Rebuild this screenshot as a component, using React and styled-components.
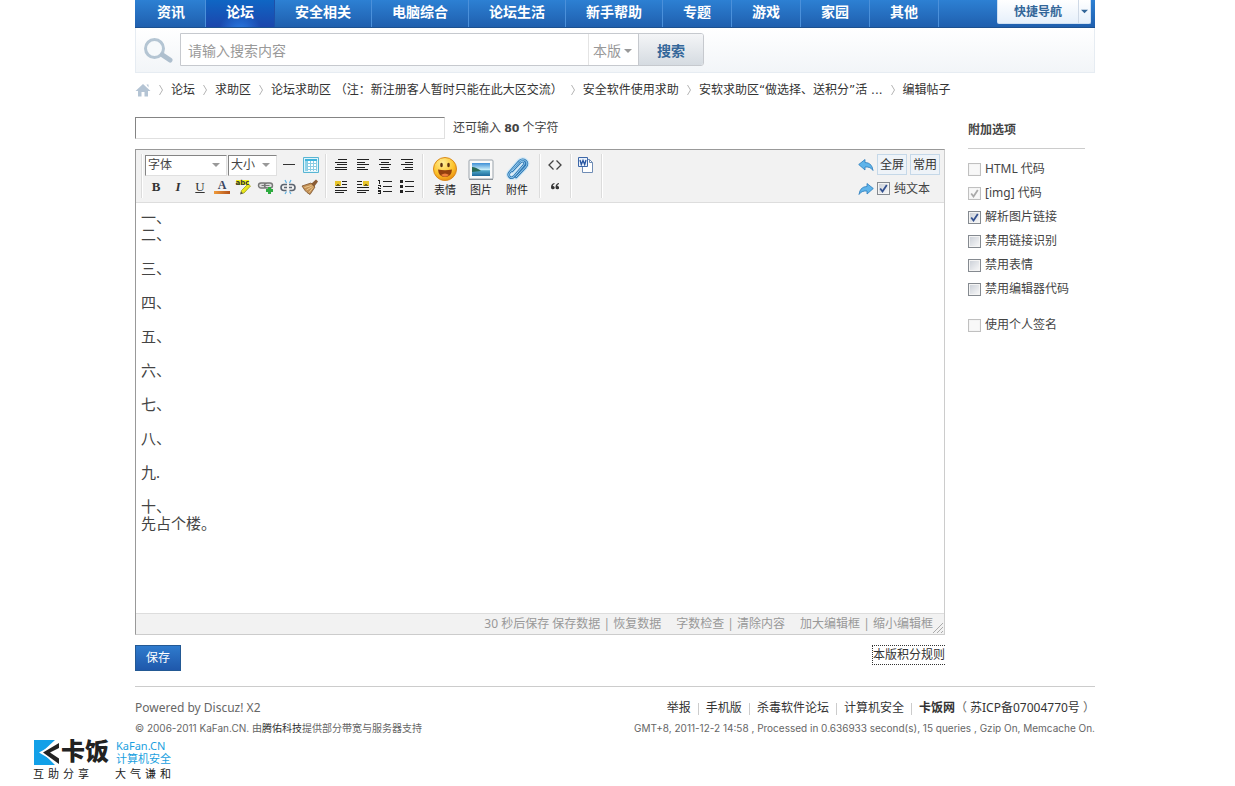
import React from "react";
import styled, { createGlobalStyle } from "styled-components";

const GlobalStyle = createGlobalStyle`
  body {
    margin: 0;
    background: #fff;
    color: #444;
    font: 12px/18px "Noto Sans", "Noto Sans CJK SC", sans-serif;
  }
  * {
    box-sizing: border-box;
  }
  button, input, select, textarea {
    font: inherit;
    color: inherit;
    margin: 0;
    padding: 0;
    border-radius: 0;
  }
  button {
    cursor: pointer;
  }
  a {
    color: #333;
    text-decoration: none;
  }
`;

const Page = styled.div`
  padding: 0 140px 0 135px;
`;

const Nav = styled.nav`
  display: flex;
  height: 28px;
  padding: 0 4px 0 2px;
  background: linear-gradient(#2d80d3, #1f5fae);
  border-bottom: 1px solid #1c5190;
`;

const NavLink = styled.a`
  padding: 0 20px;
  border-right: 1px solid ${(p) => (p.$active ? "#1e50a8" : "#4b90da")};
  background: ${(p) =>
    p.$active
      ? "radial-gradient(ellipse at 50% 120%, #2a80e8 0, transparent 45%), linear-gradient(#0f66c4, #1c46ac)"
      : "none"};
  color: #fff;
  font-size: 14px;
  font-weight: 700;
  line-height: 24px;
  white-space: nowrap;
`;

const QuickNav = styled.button`
  display: flex;
  align-items: center;
  width: 94px;
  height: 24px;
  margin-left: auto;
  border: 1px solid #cfe0f2;
  border-top: 0;
  border-radius: 0 0 2px 2px;
  background: linear-gradient(#fff, #e6f0fb);
  color: #336699;
  font-weight: 600;
  span {
    flex: 1;
  }
  svg {
    width: 12px;
    height: 100%;
    border-left: 1px solid #cfd9e6;
    padding: 0 2px;
  }
`;

const SearchBar = styled.form`
  display: flex;
  align-items: center;
  height: 45px;
  padding: 0 7px;
  border: 1px solid #e6ecf2;
  border-top: 0;
  background: linear-gradient(#fff, #f2f5f8);
`;

const SearchBox = styled.div`
  display: flex;
  width: 524px;
  height: 33px;
  margin: 0 0 1px 6px;
  border: 1px solid #c6c9ce;
  border-radius: 0 3px 3px 0;
  background: #fff;
  font-size: 14px;
`;

const SearchInput = styled.input`
  flex: 1;
  min-width: 0;
  padding: 2px 7px 0;
  border: 0;
  outline: 0;
  background: none;
  &::placeholder {
    color: #999;
    opacity: 1;
  }
`;

const Scope = styled.button`
  display: flex;
  align-items: center;
  gap: 3px;
  width: 50px;
  padding: 2px 4px 0;
  border: 0;
  border-left: 1px solid #e4e4e4;
  background: none;
  color: #999;
`;

const SearchButton = styled.button`
  width: 65px;
  padding-top: 2px;
  border: 0;
  border-left: 1px solid #c6c9ce;
  border-radius: 0 2px 2px 0;
  background: linear-gradient(#f4f5f7, #d5dbe1);
  color: #336699;
  font-weight: 700;
`;

const Crumbs = styled.nav`
  display: flex;
  align-items: center;
  height: 34px;
  font-family: "DejaVu Sans", "Noto Sans CJK SC", sans-serif;
  white-space: nowrap;
  > svg {
    flex: none;
  }
`;

const Columns = styled.div`
  display: grid;
  grid-template-columns: minmax(0, 1fr) 117px;
  gap: 23px;
  padding: 10px 10px 0 0;
`;

const Subject = styled.div`
  display: flex;
  align-items: center;
  gap: 8px;
  height: 22px;
  input {
    width: 310px;
    height: 22px;
    padding: 0 4px;
    border: 1px solid;
    border-color: #848484 #e0e0e0 #e0e0e0 #848484;
    outline: 0;
  }
  strong {
    font-family: "DejaVu Sans", sans-serif;
    font-size: 11px;
  }
`;

const Editor = styled.section`
  margin-top: 10px;
  border: 1px solid;
  border-color: #999 #ccc #ccc #999;
`;

const Toolbar = styled.div`
  display: flex;
  height: 53px;
  padding: 4px 4px 4px 5px;
  border-bottom: 1px solid #ddd;
  background: #f2f2f2;
`;

const Group = styled.div`
  padding: 0 ${(p) => p.$pad || 0}px;
  border-right: 1px solid #dcdcdc;
  box-shadow: 1px 0 #fff;
`;

const ToolRow = styled.div`
  display: flex;
  align-items: center;
  height: 22px;
`;

const Tool = styled.button`
  display: flex;
  align-items: center;
  justify-content: center;
  width: 22px;
  height: 22px;
  border: 0;
  background: none;
`;

const Letter = styled.span`
  font: ${(p) => (p.$underline ? 400 : 700)} 13px/16px "Liberation Serif", serif;
  font-style: ${(p) => (p.$italic ? "italic" : "normal")};
  text-decoration: ${(p) => (p.$underline ? "underline" : "none")};
  color: #333;
`;

const BigTools = styled(Group)`
  display: flex;
`;

const BigTool = styled.button`
  display: flex;
  flex-direction: column;
  align-items: center;
  width: 36px;
  padding-top: 2px;
  border: 0;
  background: none;
  color: #222;
  font-size: 11px;
  line-height: 16px;
`;

const Stack = styled.div`
  display: grid;
  width: ${(p) => p.$w}px;
  height: 21px;
  margin-right: 1px;
  align-items: center;
  > * {
    grid-area: 1 / 1;
  }
  svg {
    justify-self: end;
    margin-right: 7px;
    pointer-events: none;
  }
`;

const Select = styled.select`
  appearance: none;
  width: 100%;
  height: 100%;
  padding-left: 2px;
  border: 1px solid;
  border-color: #848484 #e0e0e0 #e0e0e0 #848484;
  background: #fff;
`;

const ViewTools = styled.div`
  display: grid;
  grid-template-columns: 16px auto;
  grid-template-rows: 21px 27px;
  column-gap: 3px;
  align-items: center;
  height: 48px;
  margin-left: auto;
  > div {
    display: flex;
    gap: 3px;
  }
`;

const ModeButton = styled.button`
  width: 30px;
  height: 21px;
  border: 1px solid #c5d8e8;
  background: #eef3f8;
  color: #333;
  line-height: 18px;
`;

const IconButton = styled.button`
  display: flex;
  border: 0;
  background: none;
`;

const TextArea = styled.textarea`
  display: block;
  width: 100%;
  height: 410px;
  padding: 6px 5px;
  border: 0;
  outline: 0;
  resize: none;
  font-size: 15px;
  line-height: 17px;
`;

const StatusBar = styled.div`
  display: flex;
  justify-content: flex-end;
  align-items: center;
  height: 21px;
  border-top: 1px solid #ddd;
  background: #f2f2f2;
  color: #999;
  a {
    color: #999;
  }
  > span {
    margin-right: 15px;
  }
  > span:last-of-type {
    margin-right: 0;
  }
  svg {
    align-self: flex-end;
  }
`;

const Actions = styled.div`
  display: flex;
  justify-content: space-between;
  align-items: flex-start;
  margin-top: 10px;
`;

const SaveButton = styled.button`
  width: 46px;
  height: 26px;
  border: 1px solid #235994;
  background: linear-gradient(#2f7bcd, #1f58ab);
  color: #fff;
`;

const RuleLink = styled.a`
  border: 1px dotted #333;
  border-right: 0;
`;

const SideTitle = styled.h2`
  margin: 4px 0 8px;
  padding-bottom: 9px;
  border-bottom: 1px solid #ccc;
  font-size: 12px;
  line-height: 18px;
`;

const Option = styled.label`
  display: flex;
  align-items: center;
  gap: 4px;
  height: 24px;
  margin-top: ${(p) => (p.$spaced ? 12 : 0)}px;
  color: #444;
  white-space: nowrap;
`;

const CheckMark = styled.span`
  display: grid;
  place-items: center;
  > * {
    grid-area: 1 / 1;
  }
  svg {
    pointer-events: none;
  }
`;

const CheckInput = styled.input`
  appearance: none;
  width: 13px;
  height: 13px;
  border: 1px solid ${(p) => (p.disabled ? "#c0c0c0" : "#858a90")};
  background: ${(p) =>
    p.disabled ? "#f8f8f8" : "linear-gradient(135deg, #c9ced6, #fafafa)"};
  box-shadow: inset 0 0 0 1px #f4f4f4;
`;

const Footer = styled.footer`
  display: flex;
  justify-content: space-between;
  margin-top: 15px;
  padding-top: 11px;
  border-top: 1px solid #ccc;
  color: #666;
  p {
    margin: 0;
    line-height: 20px;
  }
`;

const FooterRight = styled.div`
  text-align: right;
  i {
    display: inline-block;
    height: 12px;
    margin: 0 7px;
    border-left: 1px solid #ccc;
    vertical-align: middle;
  }
`;

const Small = styled.p`
  font-family: Inter, "Noto Sans CJK SC", sans-serif;
  font-size: 10px;
`;

const Brand = styled.div`
  display: grid;
  grid-template-columns: 28px 48px auto;
  width: max-content;
  margin-left: 33px;
  color: #222;
`;

const BrandName = styled.strong`
  font-size: 24px;
  font-weight: 900;
  line-height: 26px;
`;

const BrandSite = styled.div`
  padding: 1px 0 0 7px;
  color: #1a9fe0;
  font-size: 11px;
  line-height: 13px;
  div {
    white-space: nowrap;
  }
`;

const Mottos = styled.div`
  display: flex;
  grid-column: 1 / -1;
  justify-content: space-between;
  font-size: 11px;
  line-height: 16px;
`;

const Motto = styled.div`
  display: flex;
  gap: 4px;
`;

const Arrow = ({ size = 8, color = "#999" }) => (
  <svg width={size} height={size / 2} viewBox="0 0 8 4">
    <path d="M0 0h8L4 4z" fill={color} />
  </svg>
);

const CrumbArrow = () => (
  <svg width="20" height="12" viewBox="0 0 20 12">
    <path d="M8.500 1 L11.500 6 L8.500 11" fill="none" stroke="#b5b5b5" />
  </svg>
);

const Lines = ({ rows }) => (
  <svg width="14" height="14" viewBox="0 0 14 14" shapeRendering="crispEdges">
    {rows.map(([x, w], i) => (
      <rect key={i} x={x} y={1 + i * 2.5} width={w} height="1" fill="#222" />
    ))}
  </svg>
);

const alignments = {
  自动排版: [[4, 9], [1, 12], [3, 10], [1, 12], [1, 12]],
  左对齐: [[1, 12], [1, 8], [1, 12], [1, 8], [1, 11]],
  居中: [[1, 12], [3, 8], [1, 12], [3, 8], [2, 10]],
  右对齐: [[1, 12], [5, 8], [1, 12], [5, 8], [3, 10]],
};

const Float = ({ right }) => (
  <svg width="14" height="14" viewBox="0 0 14 14" shapeRendering="crispEdges">
    <path d={right ? "M1 1h5v1H1zM1 4h5v1H1z" : "M8 1h5v1H8zM8 4h5v1H8z"} fill="#222" />
    <path d="M1 7h12v1H1zM1 10h12v1H1zM1 12h9v1H1z" fill="#222" />
    <rect x={right ? 7 : 1} y="1" width="6" height="5" fill="#e8c52b" />
    <path d={right ? "M7 6l3-2 3 2z" : "M1 6l3-2 3 2z"} fill="#70601a" />
  </svg>
);

const List = ({ ordered }) => (
  <svg width="16" height="16" viewBox="0 0 16 16" shapeRendering="crispEdges">
    <path d="M6 2h9v1H6zM6 7h9v1H6zM6 12h9v1H6z" fill="#222" />
    {ordered ? (
      <path d="M1 1h2v4H2V2H1zM1 6h3v2H2v1h2v1H1V8h2V7H1zM1 11h3v4H1v-1h2v-1H1v-1h2H1z" fill="#222" />
    ) : (
      <path d="M1 1h3v3H1zM1 6h3v3H1zM1 11h3v3H1z" fill="#222" />
    )}
  </svg>
);

const TableIcon = () => (
  <svg width="16" height="16" viewBox="0 0 16 16">
    <path d="M.5.500h15v15H.5z" fill="#dff4fb" stroke="#58b5d3" />
    <path d="M2 2h12v2H2z" fill="#3fb4dc" />
    <path d="M2 4h2v10H2z" fill="#8fd4ea" />
    <path d="M4 4h10v10H4z" fill="#fff" />
    <path d="M4.500 4v10M7.500 4v10M10.500 4v10M13.500 4v10M4 6.500h10M4 9.500h10M4 12.500h10" stroke="#8ccce3" />
  </svg>
);

const MarkerIcon = () => (
  <svg width="18" height="18" viewBox="0 0 18 18">
    <path d="M1 2h13v5H1z" fill="#f3f31a" />
    <path d="M13 6l2.500 2-6.500 7-3 .5.500-3z" fill="#e9e71b" stroke="#9a9a20" strokeWidth=".8" />
    <path d="M5 16.500l1-3 2 2z" fill="#555" />
    <text x="7.500" y="7" textAnchor="middle" fontFamily="DejaVu Sans, sans-serif" fontWeight="700" fontSize="7" fill="#333">abc</text>
  </svg>
);

const LinkIcon = () => (
  <svg width="18" height="16" viewBox="0 0 18 16">
    <g fill="#ddd" stroke="#777" strokeWidth="1.400">
      <rect x="1.500" y="4" width="8" height="5" rx="2.500" />
      <rect x="7.500" y="4" width="8" height="5" rx="2.500" />
    </g>
    <path d="M4.500 6.500h8" stroke="#777" />
    <path d="M11 8h3v2h2v3h-2v2h-3v-2H9v-3h2z" fill="#2eab3f" />
  </svg>
);

const UnlinkIcon = () => (
  <svg width="16" height="16" viewBox="0 0 16 16">
    <path d="M7 5.500H4a2.500 2.500 0 000 6h2.500M9 5.500h3a2.500 2.500 0 010 6H9.500M4 8.500h3M9 8.500h3" fill="none" stroke="#5b6470" strokeWidth="1.600" />
    <path d="M6.500 4L5 1M9.500 4L11 1M6.500 12.500L5 15M9.500 12.500L11 15" stroke="#5fb2e2" strokeWidth="1.200" />
  </svg>
);

const BrushIcon = () => (
  <svg width="18" height="16" viewBox="0 0 18 16">
    <path d="M10 5l5-4.500 2 2L13 8z" fill="#8a5c35" />
    <path d="M1 7l9-3 4 4-5 7.500-3-2-2-2z" fill="#c29055" stroke="#7d5530" strokeWidth=".8" />
    <path d="M3.500 8.500l7-2M5.500 11l6-3.500M8 13.500l4-5" stroke="#ecc88e" />
  </svg>
);

const ColorIcon = () => (
  <svg width="16" height="16" viewBox="0 0 16 16">
    <defs>
      <linearGradient id="swatch">
        <stop offset="0" stopColor="#f09b3a" />
        <stop offset="1" stopColor="#b3521b" />
      </linearGradient>
    </defs>
    <text x="8" y="10" textAnchor="middle" fontFamily="Liberation Serif, serif" fontWeight="700" fontSize="12" fill="#3a4560">A</text>
    <path d="M0 12h16v3H0z" fill="url(#swatch)" />
  </svg>
);

const SmileIcon = () => (
  <svg width="26" height="26" viewBox="0 0 26 26">
    <defs>
      <radialGradient id="face" cx=".4" cy=".25" r=".8">
        <stop offset="0" stopColor="#fff09a" />
        <stop offset=".6" stopColor="#fdc42c" />
        <stop offset="1" stopColor="#e8860c" />
      </radialGradient>
    </defs>
    <circle cx="13" cy="13" r="11.500" fill="url(#face)" stroke="#d98a1c" />
    <ellipse cx="9.500" cy="9" rx="1.300" ry="2.300" fill="#5d3210" />
    <ellipse cx="16.500" cy="9" rx="1.300" ry="2.300" fill="#5d3210" />
    <path d="M6 13.500q7 1.500 14 0-.5 7.500-7 7.500t-7-7.500z" fill="#94400e" />
    <path d="M9 19q4-3 8 0-4 3.500-8 0z" fill="#f0803c" />
  </svg>
);

const PictureIcon = () => (
  <svg width="26" height="26" viewBox="0 0 26 26">
    <defs>
      <linearGradient id="sky" x2="0" y2="1">
        <stop offset="0" stopColor="#3d8fd6" />
        <stop offset=".5" stopColor="#c8ecf8" />
        <stop offset=".6" stopColor="#4fa6c8" />
        <stop offset="1" stopColor="#1d6a9c" />
      </linearGradient>
    </defs>
    <rect x="1" y="4" width="24" height="19" rx="1" fill="#fafafa" stroke="#9aa3ab" />
    <path d="M4 7h18v13H4z" fill="url(#sky)" />
    <path d="M4 11q4 0 9 4l-9 1z" fill="#286a56" />
    <path d="M1 23.500h24" stroke="#8a9299" />
  </svg>
);

const clipPath =
  "M8 15l8-8.500c3-3 6 0 3.500 3L10 20.500c-3 3-7-.5-4.500-4L15 5.500c4-4.500 11 .5 6.500 5.500L12 21";

const ClipIcon = () => (
  <svg width="26" height="26" viewBox="0 0 26 26" fill="none" strokeLinecap="round">
    <path d={clipPath} stroke="#cfe8f7" strokeWidth="5" />
    <path d={clipPath} stroke="#2f78b4" strokeWidth="2.600" />
    <path d={clipPath} stroke="#9ed2f2" strokeWidth="1" />
  </svg>
);

const CodeIcon = () => (
  <svg width="14" height="12" viewBox="0 0 14 12" fill="none" stroke="#444" strokeWidth="1.300">
    <path d="M5.500 1.500L1 6l4.500 4.500M8.500 1.500L13 6l-4.500 4.500" />
  </svg>
);

const QuoteIcon = () => (
  <svg width="8" height="8" viewBox="0 0 8 8" fill="#333">
    <path d="M3.500 0C1 .5 0 2 0 4.500a1.800 1.800 0 103.400-.8q-.6-.9-1.700-.7.2-1.400 1.800-2zM8 0C5.500.5 4.500 2 4.500 4.500a1.800 1.800 0 103.400-.8Q7.300 2.800 6.200 3 6.400 1.600 8 1z" />
  </svg>
);

const WordIcon = () => (
  <svg width="16" height="16" viewBox="0 0 16 16">
    <path d="M4.500 2.500h7l3 3v10h-10z" fill="#fff" stroke="#6f8cb5" />
    <path d="M11.500 2.500v3h3" fill="none" stroke="#6f8cb5" />
    <path d="M.5.500h9v9h-9z" fill="#eaf1fb" stroke="#3d67a8" />
    <path d="M2 3l1.300 4.500L5 3.500l1.700 4L8 3" fill="none" stroke="#2554a0" strokeWidth="1.300" />
  </svg>
);

const UndoIcon = ({ flip }) => (
  <svg width="16" height="14" viewBox="0 0 16 14">
    <path
      transform={flip ? "translate(16 0) scale(-1 1)" : undefined}
      d="M.7 6.500L7 1.500v3q7 0 8 8-2.500-4-8-3.500v3z"
      fill="#5fb4ea"
      stroke="#2b7cbc"
      strokeWidth=".8"
    />
  </svg>
);

const Check = ({ id, disabled, defaultChecked }) => {
  const [checked, setChecked] = React.useState(Boolean(defaultChecked));
  return (
    <CheckMark>
      <CheckInput
        id={id}
        type="checkbox"
        disabled={disabled}
        checked={checked}
        onChange={(e) => setChecked(e.target.checked)}
      />
      {checked && (
        <svg width="9" height="9" viewBox="0 0 9 9" fill="none">
          <path d="M1.200 4.500L3.500 7.500L7.800 1" stroke={disabled ? "#aaa" : "#33508f"} strokeWidth="1.800" />
        </svg>
      )}
    </CheckMark>
  );
};

const navItems = [
  "资讯",
  "论坛",
  "安全相关",
  "电脑综合",
  "论坛生活",
  "新手帮助",
  "专题",
  "游戏",
  "家园",
  "其他",
];

const crumbs = [
  "论坛",
  "求助区",
  "论坛求助区 （注：新注册客人暂时只能在此大区交流）",
  "安全软件使用求助",
  "安软求助区“做选择、送积分”活 ...",
  "编辑帖子",
];

const options = [
  { id: "html", label: "HTML 代码", disabled: true },
  { id: "img", label: "[img] 代码", disabled: true, checked: true },
  { id: "parseimg", label: "解析图片链接", checked: true },
  { id: "nolink", label: "禁用链接识别" },
  { id: "nosmile", label: "禁用表情" },
  { id: "nocode", label: "禁用编辑器代码" },
  { id: "sign", label: "使用个人签名", disabled: true, spaced: true },
];

const message =
  "一、\n二、\n\n三、\n\n四、\n\n五、\n\n六、\n\n七、\n\n八、\n\n九.\n\n十、\n先占个楼。";

const mottos = ["互助分享", "大气谦和"];

const EditorToolbar = () => (
  <Toolbar>
    <Group />
    <Group $pad={3}>
      <ToolRow>
        <Stack $w={82}>
          <Select aria-label="字体">
            <option>字体</option>
          </Select>
          <Arrow />
        </Stack>
        <Stack $w={49}>
          <Select aria-label="大小">
            <option>大小</option>
          </Select>
          <Arrow />
        </Stack>
        <Tool aria-label="分隔线">
          <svg width="12" height="2">
            <path d="M0 0h12v1H0z" fill="#333" />
          </svg>
        </Tool>
        <Tool aria-label="表格"><TableIcon /></Tool>
      </ToolRow>
      <ToolRow>
        <Tool><Letter>B</Letter></Tool>
        <Tool><Letter $italic>I</Letter></Tool>
        <Tool><Letter $underline>U</Letter></Tool>
        <Tool aria-label="文字颜色"><ColorIcon /></Tool>
        <Tool aria-label="背景色"><MarkerIcon /></Tool>
        <Tool aria-label="添加链接"><LinkIcon /></Tool>
        <Tool aria-label="移除链接"><UnlinkIcon /></Tool>
        <Tool aria-label="清除格式"><BrushIcon /></Tool>
      </ToolRow>
    </Group>
    <Group $pad={4}>
      <ToolRow>
        {Object.entries(alignments).map(([name, rows]) => (
          <Tool key={name} aria-label={name}><Lines rows={rows} /></Tool>
        ))}
      </ToolRow>
      <ToolRow>
        <Tool aria-label="左浮动"><Float /></Tool>
        <Tool aria-label="右浮动"><Float right /></Tool>
        <Tool aria-label="有序列表"><List ordered /></Tool>
        <Tool aria-label="无序列表"><List /></Tool>
      </ToolRow>
    </Group>
    <BigTools $pad={4}>
      <BigTool><SmileIcon />表情</BigTool>
      <BigTool><PictureIcon />图片</BigTool>
      <BigTool><ClipIcon />附件</BigTool>
    </BigTools>
    <Group $pad={4}>
      <ToolRow><Tool aria-label="代码"><CodeIcon /></Tool></ToolRow>
      <ToolRow><Tool aria-label="引用"><QuoteIcon /></Tool></ToolRow>
    </Group>
    <Group $pad={4}>
      <ToolRow><Tool aria-label="Word"><WordIcon /></Tool></ToolRow>
    </Group>
    <ViewTools>
      <IconButton aria-label="撤销"><UndoIcon /></IconButton>
      <div>
        <ModeButton>全屏</ModeButton>
        <ModeButton>常用</ModeButton>
      </div>
      <IconButton aria-label="重做"><UndoIcon flip /></IconButton>
      <Option htmlFor="plain">
        <Check id="plain" defaultChecked />
        纯文本
      </Option>
    </ViewTools>
  </Toolbar>
);

const App = () => {
  return (
    <>
      <GlobalStyle />
      <Page>
        <Nav>
          {navItems.map((name) => (
            <NavLink key={name} href="#" $active={name === "论坛"}>{name}</NavLink>
          ))}
          <QuickNav>
            <span>快捷导航</span>
            <Arrow size={6} color="#336699" />
          </QuickNav>
        </Nav>
        <SearchBar onSubmit={(e) => e.preventDefault()}>
          <svg width="31" height="28" viewBox="0 0 31 28">
            <circle cx="11.500" cy="12.500" r="9" fill="#f6f9fb" stroke="#b4c5d3" strokeWidth="3" />
            <path d="M19.500 19l7.500 5" stroke="#aebfce" strokeWidth="5" strokeLinecap="round" />
          </svg>
          <SearchBox>
            <SearchInput aria-label="搜索" placeholder="请输入搜索内容" />
            <Scope type="button">本版<Arrow /></Scope>
            <SearchButton>搜索</SearchButton>
          </SearchBox>
        </SearchBar>
        <Crumbs>
          <svg width="16" height="14" viewBox="0 0 16 14" fill="#b4c4d4">
            <path d="M8 1l7.500 7H13v5.500H9.500V9h-3v4.500H3V8H.5zM11.500 1.500h2v3z" />
          </svg>
          {crumbs.map((name) => (
            <React.Fragment key={name}>
              <CrumbArrow />
              <a href="#">{name}</a>
            </React.Fragment>
          ))}
        </Crumbs>
        <Columns>
          <main>
            <Subject>
              <input aria-label="标题" />
              <span>还可输入 <strong>80</strong> 个字符</span>
            </Subject>
            <Editor>
              <EditorToolbar />
              <TextArea aria-label="内容" spellCheck={false} defaultValue={message} />
              <StatusBar>
                <span>30 秒后保存 <a href="#">保存数据</a> | <a href="#">恢复数据</a></span>
                <span><a href="#">字数检查</a> | <a href="#">清除内容</a></span>
                <span><a href="#">加大编辑框</a> | <a href="#">缩小编辑框</a></span>
                <svg width="11" height="13" viewBox="0 0 11 13" stroke="#aaa">
                  <path d="M0 12L10 2M4 12l6-6M8 12l2-2" />
                </svg>
              </StatusBar>
            </Editor>
            <Actions>
              <SaveButton>保存</SaveButton>
              <RuleLink href="#">本版积分规则</RuleLink>
            </Actions>
          </main>
          <aside>
            <SideTitle>附加选项</SideTitle>
            {options.map((o) => (
              <Option key={o.id} htmlFor={o.id} $spaced={o.spaced}>
                <Check id={o.id} disabled={o.disabled} defaultChecked={o.checked} />
                {o.label}
              </Option>
            ))}
          </aside>
        </Columns>
        <Footer>
          <div>
            <p>Powered by Discuz! X2</p>
            <Small>© 2006-2011 KaFan.CN. 由<a href="#">腾佑科技</a>提供部分带宽与服务器支持</Small>
          </div>
          <FooterRight>
            <p>
              <a href="#">举报</a><i />
              <a href="#">手机版</a><i />
              <a href="#">杀毒软件论坛</a><i />
              <a href="#">计算机安全</a><i />
              <a href="#"><strong>卡饭网</strong></a>（ <a href="#">苏ICP备07004770号</a> ）
            </p>
            <Small>GMT+8, 2011-12-2 14:58 , Processed in 0.636933 second(s), 15 queries , Gzip On, Memcache On.</Small>
          </FooterRight>
        </Footer>
      </Page>
      <Brand>
        <svg width="27" height="28" viewBox="0 0 27 28">
          <path d="M1 2h21L9 14l13 13H1z" fill="#12a0e8" />
          <path d="M27 3L6 14.500 27 27z" fill="#fff" />
          <path d="M26 5v5l-9 4.500 9 6v5.500L10 14.500z" fill="#222" />
        </svg>
        <BrandName>卡饭</BrandName>
        <BrandSite>
          <div>KaFan.CN</div>
          <div>计算机安全</div>
        </BrandSite>
        <Mottos>
          {mottos.map((words) => (
            <Motto key={words}>
              {[...words].map((char) => (
                <span key={char}>{char}</span>
              ))}
            </Motto>
          ))}
        </Mottos>
      </Brand>
    </>
  );
};

export default App;
